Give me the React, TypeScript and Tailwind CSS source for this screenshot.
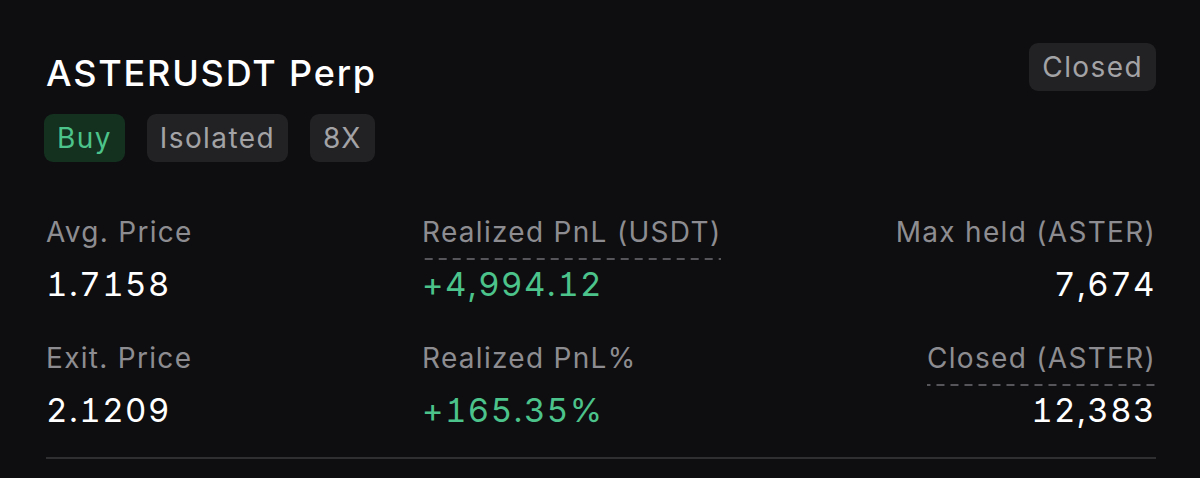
import type { ReactNode } from "react";

const FONT = { fontFamily: "Inter, 'Noto Sans', sans-serif" };

function Tag({ children, tone = "gray" }: { children: ReactNode; tone?: "gray" | "green" }) {
  return (
    <span
      className={`inline-flex h-[48px] items-center rounded-[9px] px-[13px] text-[28px] leading-none tracking-[1.4px] ${
        tone === "green" ? "bg-[#14301f] text-[#4cc38a]" : "bg-[#222124] text-[#a3a3a6]"
      }`}
    >
      {children}
    </span>
  );
}

function Stat({
  label,
  value,
  dashed,
  green,
  right,
}: {
  label: string;
  value: string;
  dashed?: boolean;
  green?: boolean;
  right?: boolean;
}) {
  return (
    <div className={`flex flex-col ${right ? "items-end" : "items-start"}`}>
      <span
        className={`pb-[11px] text-[28px] leading-[34px] tracking-[1.3px] text-[#8d8d91] ${
          dashed
            ? "bg-[linear-gradient(to_right,#55555a_55%,transparent_0)] bg-[length:14px_2px] bg-bottom bg-repeat-x"
            : ""
        }`}
      >
        {label}
      </span>
      <span
        className={`mt-[5px] text-[33px] leading-[38px] tracking-[1.5px] [font-feature-settings:'tnum','cv01'] ${
          green ? "text-[#4cc38a]" : "text-white"
        }`}
      >
        {value}
      </span>
    </div>
  );
}

export default function App() {
  return (
    <div className="h-[478px] w-[1200px] overflow-hidden bg-[#0e0d10]" style={FONT}>
      <div className="px-[44px] pt-[43px]">
        <div className="flex items-start justify-between">
          <div className="flex flex-col pl-[2px]">
            <h1 className="mt-[13px] text-[36px] font-medium leading-[35px] tracking-[1.8px] text-white">
              ASTERUSDT Perp
            </h1>
            <div className="mt-[23px] -ml-[2px] flex gap-[22px]">
              <Tag tone="green">Buy</Tag>
              <Tag>Isolated</Tag>
              <Tag>8X</Tag>
            </div>
          </div>
          <Tag>Closed</Tag>
        </div>

        <div className="mt-[53px] grid grid-cols-[376px_1fr_auto] gap-y-[38px] pl-[2px]">
          <Stat label="Avg. Price" value="1.7158" />
          <Stat label="Realized PnL (USDT)" value="+4,994.12" dashed green />
          <Stat label="Max held (ASTER)" value="7,674" right />
          <Stat label="Exit. Price" value="2.1209" />
          <Stat label="Realized PnL%" value="+165.35%" green />
          <Stat label="Closed (ASTER)" value="12,383" dashed right />
        </div>

        <div className="mt-[28px] ml-[2px] h-[2px] bg-[#2f2f32]" />
      </div>
    </div>
  );
}
